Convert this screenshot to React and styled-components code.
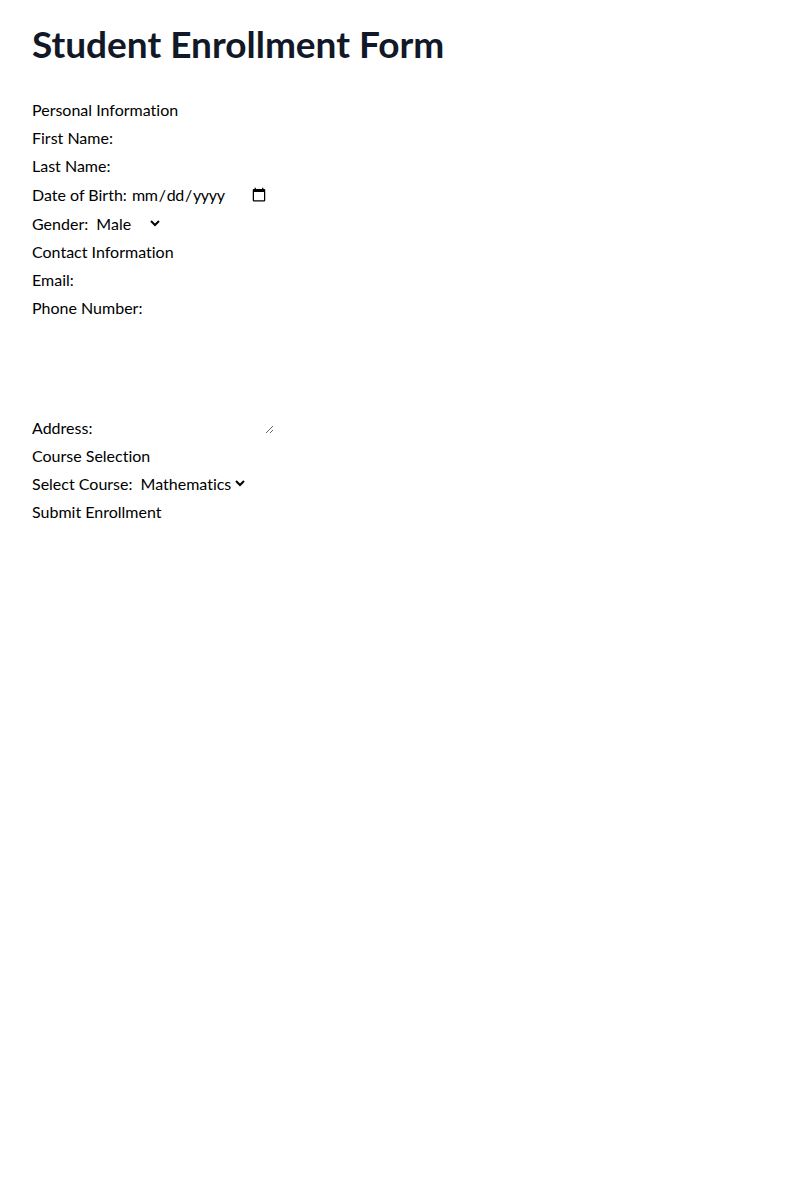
import React from "react";
import styled, { createGlobalStyle } from "styled-components";

const Global = createGlobalStyle`
  *, *::before, *::after { box-sizing: border-box; border: 0 solid #e5e7eb; }
  html, body { margin: 0; padding: 0; background: #ffffff; }
  body {
    font-family: Lato, "Noto Sans", sans-serif;
    font-size: 16px;
    line-height: 28px;
    color: #000000;
    font-variant-ligatures: none;
  }
  h1, p { margin: 0; }
  button, input, select, textarea {
    font-family: inherit;
    font-size: 100%;
    font-weight: inherit;
    line-height: inherit;
    color: inherit;
    margin: 0;
    padding: 0;
    background: transparent;
    font-variant-ligatures: none;
  }
  textarea { resize: vertical; }
  button { cursor: pointer; }
`;

const Page = styled.div`
  padding: 24px 32px;
`;

const Title = styled.h1`
  font-size: 37px;
  line-height: 40px;
  font-weight: 700;
  color: #111827;
  margin-bottom: 32px;
`;

const Form = styled.form`
  display: block;
`;

const Section = styled.div`
  display: block;
`;

const Row = styled.div`
  display: block;
`;

const Field = styled.input`
  ${(p) => (p.type === "date" ? "letter-spacing: -0.3px;" : "")}
`;
const Select = styled.select``;
const Area = styled.textarea`
  width: 177px;
`;
const Submit = styled.button`
  display: inline;
`;

export default function App() {
  return (
    <>
      <Global />
      <Page>
        <Title>Student Enrollment Form</Title>
        <Form onSubmit={(e) => e.preventDefault()}>
          <Section>
            <Row>Personal Information</Row>
            <Row>
              <label>First Name:</label> <Field type="text" />
            </Row>
            <Row>
              <label>Last Name:</label> <Field type="text" />
            </Row>
            <Row>
              <label>Date of Birth:</label> <Field type="date" />
            </Row>
            <Row>
              <label>Gender:</label>{" "}
              <Select defaultValue="Male">
                <option>Male</option>
                <option>Female</option>
                <option>Other</option>
              </Select>
            </Row>
          </Section>
          <Section>
            <Row>Contact Information</Row>
            <Row>
              <label>Email:</label> <Field type="email" />
            </Row>
            <Row>
              <label>Phone Number:</label> <Field type="tel" />
            </Row>
            <Row>
              <label>Address:</label> <Area rows={4} />
            </Row>
          </Section>
          <Section>
            <Row>Course Selection</Row>
            <Row>
              <label>Select Course:</label>{" "}
              <Select defaultValue="Mathematics">
                <option>Mathematics</option>
                <option>Physics</option>
                <option>Chemistry</option>
                <option>Biology</option>
              </Select>
            </Row>
          </Section>
          <Row>
            <Submit type="submit">Submit Enrollment</Submit>
          </Row>
        </Form>
      </Page>
    </>
  );
}
